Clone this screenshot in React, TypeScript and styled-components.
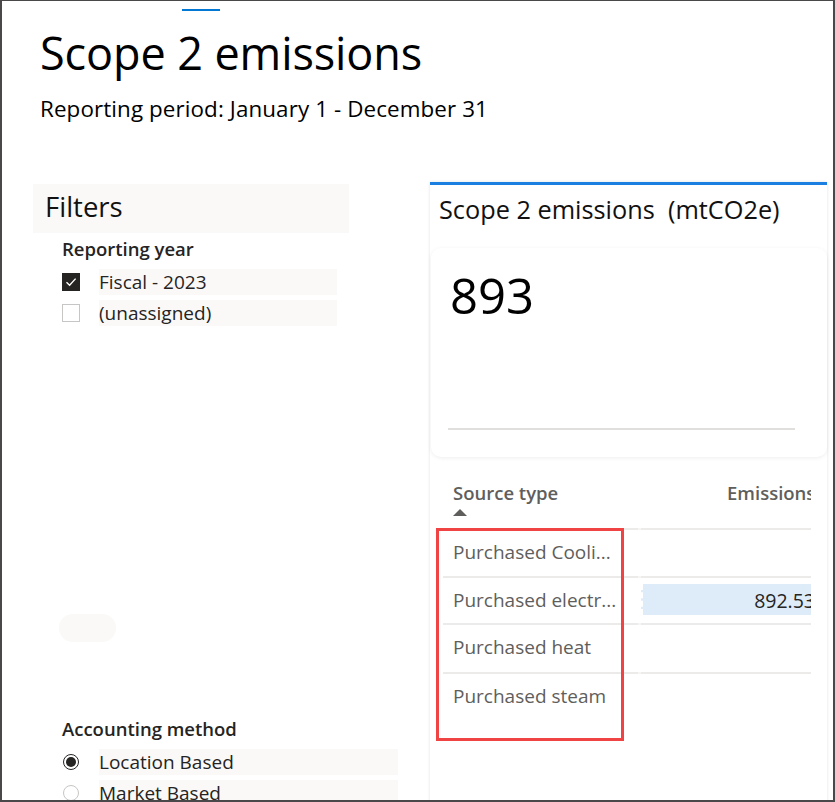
import React from "react";
import styled, { createGlobalStyle } from "styled-components";

const Global = createGlobalStyle`
  html, body { margin: 0; padding: 0; background: #ffffff; }
  body { font-family: "Open Sans", "Noto Sans", sans-serif; color: #000; }
  * { box-sizing: border-box; }
`;

const Frame = styled.div`
  position: relative;
  width: 835px;
  height: 802px;
  border-top: 1px solid #4a4849;
  border-left: 2px solid #4a4849;
  border-right: 2px solid #4a4849;
  border-bottom: 2px solid #4a4849;
  overflow: hidden;
  background: #fff;
`;

const TabMark = styled.div`
  width: 38px;
  height: 2px;
  margin: 8px 0 0 180px;
  background: #0078d4;
`;

const Header = styled.header`
  padding: 15px 0 0 38px;
`;

const Title = styled.h1`
  margin: 0;
  font-size: 45px;
  line-height: 54px;
  font-weight: 400;
  color: #000;
  letter-spacing: -0.1px;
`;

const Subtitle = styled.div`
  margin-top: 15px;
  font-size: 22.4px;
  line-height: 28px;
  color: #000;
  letter-spacing: 0.1px;
`;

const Body = styled.div`
  display: grid;
  grid-template-columns: 316px 397px;
  column-gap: 81px;
  padding-left: 31px;
  margin-top: 59px;
  align-items: start;
`;

const LeftCol = styled.div`
  display: flex;
  flex-direction: column;
  padding-top: 2px;
`;

const FilterHeader = styled.div`
  height: 49px;
  background: #faf9f8;
  padding-left: 12px;
  font-size: 27.5px;
  line-height: 46px;
  color: #111;
`;

const Section = styled.div<{ $top: number }>`
  margin-top: ${(p) => p.$top}px;
  padding-left: 29px;
  display: flex;
  flex-direction: column;
`;

const SectionLabel = styled.div`
  font-size: 18.5px;
  line-height: 26px;
  font-weight: 600;
  color: #252423;
  margin-bottom: 7px;
`;

const Option = styled.div`
  display: flex;
  align-items: center;
  height: 26px;
  margin-bottom: 5px;
`;

const Box = styled.span<{ $on?: boolean }>`
  width: 18px;
  height: 18px;
  flex: none;
  display: flex;
  align-items: center;
  justify-content: center;
  background: ${(p) => (p.$on ? "#252423" : "#fff")};
  border: 1px solid ${(p) => (p.$on ? "#252423" : "#c8c6c4")};
`;

const Radio = styled.span<{ $on?: boolean }>`
  width: 16px;
  height: 16px;
  margin-left: 1px;
  flex: none;
  border-radius: 50%;
  border: 1px solid ${(p) => (p.$on ? "#252423" : "#c8c6c4")};
  display: flex;
  align-items: center;
  justify-content: center;
  &::after {
    content: "";
    width: 10px;
    height: 10px;
    border-radius: 50%;
    background: ${(p) => (p.$on ? "#252423" : "transparent")};
  }
`;

const OptionLabel = styled.span<{ $w: number; $radio?: boolean }>`
  flex: none;
  margin-left: ${(p) => (p.$radio ? 20 : 19)}px;
  width: ${(p) => p.$w}px;
  height: 26px;
  background: #faf9f8;
  font-size: 19px;
  line-height: 26px;
  color: #252423;
  white-space: nowrap;
`;

const Pill = styled.div`
  margin: 283px 0 0 26px;
  width: 57px;
  height: 28px;
  border-radius: 14px;
  background: #faf9f8;
`;

const Card = styled.section`
  height: 640px;
  border-top: 3px solid #1a7fe0;
  background: #fff;
  box-shadow: 0 0 3px rgba(0, 0, 0, 0.12);
  display: flex;
  flex-direction: column;
`;

const CardTitle = styled.div`
  padding: 8px 0 0 9px;
  height: 63px;
  font-size: 25.3px;
  line-height: 32px;
  color: #111;
  white-space: nowrap;
`;

const Kpi = styled.div`
  margin-left: 1px;
  height: 209px;
  border-radius: 10px;
  background: #fff;
  box-shadow: 0 1px 4px rgba(0, 0, 0, 0.07);
  padding: 15px 32px 0 19px;
  display: flex;
  flex-direction: column;
`;

const KpiValue = styled.div`
  font-size: 49px;
  line-height: 64px;
  color: #000;
  height: 165px;
`;

const KpiRule = styled.div`
  height: 2px;
  background: #e1dfdd;
  margin-left: -2px;
`;

const TableWrap = styled.div`
  margin: 23px 0 0 13px;
  width: 368px;
  overflow: hidden;
`;

const HeadRow = styled.div`
  display: grid;
  grid-template-columns: 198px 190px;
  height: 48px;
`;

const HeadCell = styled.div<{ $pad: number }>`
  padding-left: ${(p) => p.$pad}px;
  font-size: 18.5px;
  line-height: 26px;
  font-weight: 600;
  color: #605e5c;
  white-space: nowrap;
  display: flex;
  flex-direction: column;
`;

const SortArrow = styled.span`
  margin-top: 3px;
  width: 0;
  height: 0;
  border-left: 7px solid transparent;
  border-right: 7px solid transparent;
  border-bottom: 7px solid #605e5c;
`;

const Row = styled.div<{ $h: number }>`
  display: grid;
  grid-template-columns: 195px 3px 174px;
  height: ${(p) => p.$h}px;
`;

const NameCell = styled.div`
  border-top: 2px solid #edebe9;
  padding-left: 10px;
  font-size: 19px;
  line-height: 44px;
  color: #605e5c;
  white-space: nowrap;
`;

const Gap = styled.div`
  border-top: 2px solid #f6f5f4;
`;

const ValueCell = styled.div`
  border-top: 2px solid #edebe9;
  padding: 6px 0 0 0;
`;

const ValueBar = styled.div`
  height: 31px;
  background: #deecf9;
  border-left: 2px dashed #ffffff;
  text-align: right;
  font-size: 19.5px;
  line-height: 33px;
  color: #252423;
  white-space: nowrap;
`;

const Highlight = styled.div`
  position: absolute;
  left: 434px;
  top: 527px;
  width: 188px;
  height: 213px;
  border: 3px solid #f04444;
  pointer-events: none;
`;

const Check = () => (
  <svg width="14" height="14" viewBox="0 0 14 14">
    <path d="M2.5 7.2 L5.6 10.2 L11.6 3.6" stroke="#fff" strokeWidth="1.4" fill="none" />
  </svg>
);

const rows = [
  { name: "Purchased Cooli...", h: 48 },
  { name: "Purchased electr...", h: 47, value: "892.53" },
  { name: "Purchased heat", h: 49 },
  { name: "Purchased steam", h: 48 },
];

export default function App() {
  return (
    <Frame>
      <Global />
      <TabMark />
      <Header>
        <Title>Scope 2 emissions</Title>
        <Subtitle>Reporting period: January 1 - December 31</Subtitle>
      </Header>
      <Body>
        <LeftCol>
          <FilterHeader>Filters</FilterHeader>
          <Section $top={3}>
            <SectionLabel>Reporting year</SectionLabel>
            <Option>
              <Box $on>
                <Check />
              </Box>
              <OptionLabel $w={238}>Fiscal - 2023</OptionLabel>
            </Option>
            <Option>
              <Box />
              <OptionLabel $w={238}>(unassigned)</OptionLabel>
            </Option>
          </Section>
          <Pill />
          <Section $top={74}>
            <SectionLabel>Accounting method</SectionLabel>
            <Option>
              <Radio $on />
              <OptionLabel $w={299} $radio>
                Location Based
              </OptionLabel>
            </Option>
            <Option>
              <Radio />
              <OptionLabel $w={299} $radio>
                Market Based
              </OptionLabel>
            </Option>
          </Section>
        </LeftCol>
        <Card>
          <CardTitle>Scope 2 emissions&nbsp; (mtCO2e)</CardTitle>
          <Kpi>
            <KpiValue>893</KpiValue>
            <KpiRule />
          </Kpi>
          <TableWrap>
            <HeadRow>
              <HeadCell $pad={10}>
                Source type
                <SortArrow />
              </HeadCell>
              <HeadCell $pad={86}>Emissions (mtCO2e)</HeadCell>
            </HeadRow>
            {rows.map((r) => (
              <Row key={r.name} $h={r.h}>
                <NameCell>{r.name}</NameCell>
                <Gap />
                <ValueCell>{r.value ? <ValueBar>{r.value}</ValueBar> : null}</ValueCell>
              </Row>
            ))}
          </TableWrap>
        </Card>
      </Body>
      <Highlight />
    </Frame>
  );
}
